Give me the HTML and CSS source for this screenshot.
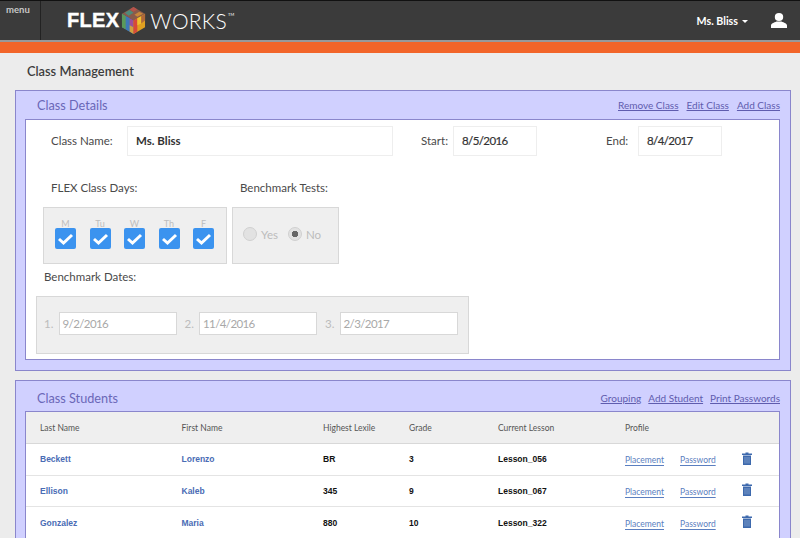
FILE: index.html
```html
<!DOCTYPE html>
<html lang="en">
  <head>
    <meta charset="UTF-8" />
    <meta name="viewport" content="width=device-width, initial-scale=1.0" />
    <title>Class Management</title>
    <link rel="stylesheet" href="styles.css">
  </head>
  <body>
    <header class="topbar">
      <div class="menu">menu</div>
      <div class="logo">
        <span class="logo-flex">FLEX</span>
        <svg class="cube" width="25" height="29" viewBox="0 0 26 30">
          <polygon points="13,1 25,8 13,15 1,8" fill="#8a5a4a"/>
          <polygon points="9,3.5 13,1 17,3.5 13,6" fill="#b5534b"/>
          <polygon points="4,7 9,4 13,7 8,10" fill="#4f8a7a"/>
          <polygon points="14,9 19,6 23,8 17,11" fill="#c9873c"/>
          <polygon points="1,8 13,15 13,29 1,22" fill="#4a7fa8"/>
          <polygon points="1,8 5,10.5 5,24 1,22" fill="#5b9a5a"/>
          <polygon points="5,10.5 9,12.7 9,26.5 5,24" fill="#3f78b8"/>
          <polygon points="9,12.7 13,15 13,22 9,20" fill="#9a4f9c"/>
          <polygon points="9,20 13,22 13,29 9,26.5" fill="#d0a040"/>
          <polygon points="13,15 25,8 25,22 13,29" fill="#e0a020"/>
          <polygon points="13,15 17,12.7 17,26.5 13,29" fill="#d8483a"/>
          <polygon points="17,12.7 21,10.5 21,18 17,20" fill="#f0c030"/>
          <polygon points="21,10.5 25,8 25,15 21,18" fill="#b0683a"/>
        </svg>
        <span class="logo-works">WORKS</span>
        <span class="logo-tm">TM</span>
      </div>
      <div class="user">
        <span class="user-name">Ms. Bliss</span>
        <span class="caret"></span>
        <svg class="user-icon" width="18" height="15" viewBox="0 0 18 15">
          <ellipse cx="9" cy="4" rx="4.2" ry="4" fill="#fff"/>
          <path d="M1 15 V12.5 C1 10.5 4 9.5 6.5 8.5 H11.5 C14 9.5 17 10.5 17 12.5 V15 Z" fill="#fff"/>
        </svg>
      </div>
    </header>
    <div class="stripe"></div>

    <main class="page">
      <h1 class="page-title">Class Management</h1>

      <section class="panel panel-details">
        <div class="panel-head">
          <h2>Class Details</h2>
          <div class="panel-links">
            <a href="#">Remove Class</a>
            <a href="#">Edit Class</a>
            <a href="#">Add Class</a>
          </div>
        </div>
        <div class="panel-body details">
          <div class="name-row">
            <label class="lbl lbl-name">Class Name:</label>
            <div class="field field-name">Ms. Bliss</div>
            <label class="lbl lbl-start">Start:</label>
            <div class="field field-date">8/5/2016</div>
            <label class="lbl lbl-end">End:</label>
            <div class="field field-date">8/4/2017</div>
          </div>

          <div class="heading-row">
            <span class="lbl lbl-days">FLEX Class Days:</span>
            <span class="lbl">Benchmark Tests:</span>
          </div>

          <div class="option-row">
            <div class="well days">
              <div class="day"><span>M</span><i class="check"><svg width="17" height="14" viewBox="0 0 17 14"><path d="M2 7 L6.5 11 L15 3" /></svg></i></div>
              <div class="day"><span>Tu</span><i class="check"><svg width="17" height="14" viewBox="0 0 17 14"><path d="M2 7 L6.5 11 L15 3" /></svg></i></div>
              <div class="day"><span>W</span><i class="check"><svg width="17" height="14" viewBox="0 0 17 14"><path d="M2 7 L6.5 11 L15 3" /></svg></i></div>
              <div class="day"><span>Th</span><i class="check"><svg width="17" height="14" viewBox="0 0 17 14"><path d="M2 7 L6.5 11 L15 3" /></svg></i></div>
              <div class="day"><span>F</span><i class="check"><svg width="17" height="14" viewBox="0 0 17 14"><path d="M2 7 L6.5 11 L15 3" /></svg></i></div>
            </div>
            <div class="well tests">
              <i class="radio"></i><span class="radio-label">Yes</span>
              <i class="radio radio-on"></i><span class="radio-label">No</span>
            </div>
          </div>

          <div class="lbl lbl-dates">Benchmark Dates:</div>
          <div class="well dates">
            <span class="date-num">1.</span><div class="date-input">9/2/2016</div>
            <span class="date-num">2.</span><div class="date-input">11/4/2016</div>
            <span class="date-num">3.</span><div class="date-input">2/3/2017</div>
          </div>
        </div>
      </section>

      <section class="panel panel-students">
        <div class="panel-head">
          <h2>Class Students</h2>
          <div class="panel-links">
            <a href="#">Grouping</a>
            <a href="#">Add Student</a>
            <a href="#">Print Passwords</a>
          </div>
        </div>
        <div class="panel-body">
          <table class="students">
            <colgroup>
              <col class="c-last"><col class="c-first"><col class="c-lexile"><col class="c-grade"><col class="c-lesson"><col class="c-place"><col class="c-pass"><col>
            </colgroup>
            <thead>
              <tr><th>Last Name</th><th>First Name</th><th>Highest Lexile</th><th>Grade</th><th>Current Lesson</th><th colspan="3">Profile</th></tr>
            </thead>
            <tbody>
              <tr>
                <td class="name">Beckett</td><td class="name">Lorenzo</td><td>BR</td><td>3</td><td>Lesson_056</td>
                <td class="link"><a href="#">Placement</a></td><td class="link"><a href="#">Password</a></td>
                <td><svg class="trash" width="10" height="13" viewBox="0 0 10 13"><path d="M3.5 1.5 V0.5 H6.5 V1.5 H10 V3 H0 V1.5 Z M1 3.6 H9 V13 H1 Z" fill="#3d69ad"/><path d="M3 5 V11.5 M5 5 V11.5 M7 5 V11.5" stroke="#8faad2" stroke-width=".8"/></svg></td>
              </tr>
              <tr>
                <td class="name">Ellison</td><td class="name">Kaleb</td><td>345</td><td>9</td><td>Lesson_067</td>
                <td class="link"><a href="#">Placement</a></td><td class="link"><a href="#">Password</a></td>
                <td><svg class="trash" width="10" height="13" viewBox="0 0 10 13"><path d="M3.5 1.5 V0.5 H6.5 V1.5 H10 V3 H0 V1.5 Z M1 3.6 H9 V13 H1 Z" fill="#3d69ad"/><path d="M3 5 V11.5 M5 5 V11.5 M7 5 V11.5" stroke="#8faad2" stroke-width=".8"/></svg></td>
              </tr>
              <tr>
                <td class="name">Gonzalez</td><td class="name">Maria</td><td>880</td><td>10</td><td>Lesson_322</td>
                <td class="link"><a href="#">Placement</a></td><td class="link"><a href="#">Password</a></td>
                <td><svg class="trash" width="10" height="13" viewBox="0 0 10 13"><path d="M3.5 1.5 V0.5 H6.5 V1.5 H10 V3 H0 V1.5 Z M1 3.6 H9 V13 H1 Z" fill="#3d69ad"/><path d="M3 5 V11.5 M5 5 V11.5 M7 5 V11.5" stroke="#8faad2" stroke-width=".8"/></svg></td>
              </tr>
            </tbody>
          </table>
        </div>
      </section>
    </main>
  </body>
</html>
```

FILE: styles.css
```css
html, body {
  height: 100%;
  overflow: hidden;
}

body {
  margin: 0;
  background: #ececec;
  font-family: Lato, "Open Sans", sans-serif;
  color: #3c3c3c;
}

.topbar {
  display: flex;
  height: 39px;
  background: #3b3b3b;
  border-top: 1px solid #111;
}

.menu {
  width: 41px;
  border-right: 1px solid #222;
  padding: 3px 0 0 6px;
  box-sizing: border-box;
  font-size: 9.5px;
  font-weight: 700;
  color: #c8c8c8;
}

.logo {
  display: flex;
  align-items: center;
  margin-left: 26px;
  color: #fff;
}

.logo-flex {
  font-family: "Liberation Sans", sans-serif;
  font-size: 20px;
  font-weight: 700;
  letter-spacing: 0.3px;
  -webkit-text-stroke: 0.4px #fff;
}

.cube {
  margin: 0 4px 0 2px;
}

.logo-works {
  font-size: 21px;
  font-weight: 300;
  letter-spacing: 0.3px;
}

.logo-tm {
  font-size: 4px;
  margin: -12px 0 0 1px;
}

.user {
  display: flex;
  align-items: center;
  margin-left: auto;
  padding-right: 12px;
}

.user-name {
  font-size: 10.7px;
  font-weight: 700;
  color: #fff;
}

.caret {
  width: 0;
  height: 0;
  margin: 1px 0 0 4px;
  border-left: 3px solid transparent;
  border-right: 3px solid transparent;
  border-top: 3px solid #fff;
}

.user-icon {
  margin-left: 22px;
}

.stripe {
  height: 11px;
  background: #f26529;
  border-top: 2px solid #999;
}

.page {
  padding: 0 9px 0 15px;
}

.page-title {
  margin: 0;
  padding: 11px 0 11px 12px;
  font-size: 12.8px;
  line-height: 15px;
  font-weight: 600;
  color: #3c3c3c;
}

.panel {
  margin-bottom: 9px;
  background: #d0d0ff;
  border: 1px solid #8a86cc;
  padding: 0 10px 10px 9px;
}

.panel-head {
  display: flex;
  justify-content: space-between;
  align-items: center;
  height: 28px;
  padding: 0 0 0 12px;
}

.panel-students .panel-head {
  box-sizing: border-box;
  height: 30px;
  padding-top: 3px;
}

.panel-head h2 {
  margin: 0;
  font-size: 12.7px;
  font-weight: 400;
  color: #6a67b8;
}

.panel-links {
  display: flex;
  gap: 8px;
  font-size: 10px;
}

.panel-students .panel-links {
  gap: 7px;
}

.panel-links a {
  color: #5f5cae;
}

.panel-body {
  background: #fff;
  border: 1px solid #8a86cc;
}

.details {
  height: 241px;
  box-sizing: border-box;
  padding: 6px 0 0 10px;
}

.lbl {
  font-size: 11.5px;
  font-weight: 400;
  color: #4a4a4a;
}

.name-row {
  display: flex;
  align-items: center;
}

.name-row .lbl {
  padding-bottom: 2px;
}

.field {
  height: 30px;
  box-sizing: border-box;
  border: 1px solid #eee;
  padding-left: 8px;
  font-size: 11.5px;
  font-weight: 700;
  line-height: 28px;
  color: #333;
}

.lbl-name {
  width: 76px;
  padding-left: 15px;
  box-sizing: content-box;
}

.field-name {
  width: 266px;
}

.lbl-start {
  width: 32px;
  margin-left: 28px;
}

.field-date {
  width: 84px;
  font-weight: 400;
  letter-spacing: -0.6px;
  -webkit-text-stroke: 0.2px #333;
}

.lbl-end {
  width: 32px;
  margin-left: 69px;
}

.heading-row {
  display: flex;
  margin-top: 25px;
  padding-left: 15px;
}

.lbl-days {
  width: 189px;
}

.option-row {
  display: flex;
  gap: 5px;
  margin-top: 13px;
  padding-left: 7px;
}

.well {
  box-sizing: border-box;
  background: #efefef;
  border: 1px solid #d8d8d8;
}

.days {
  display: flex;
  gap: 13.5px;
  width: 184px;
  height: 57px;
  padding: 11px 0 0 11px;
}

.day {
  display: flex;
  flex-direction: column;
  align-items: center;
  width: 21px;
  font-size: 9px;
  color: #bdbdbd;
}

.day span {
  height: 9px;
  line-height: 9px;
}

.check {
  display: flex;
  justify-content: center;
  align-items: center;
  width: 21px;
  height: 21px;
  border-radius: 2px;
  background: #3b93ef;
}

.check path {
  fill: none;
  stroke: #fff;
  stroke-width: 3;
}

.tests {
  display: flex;
  align-items: center;
  width: 107px;
  height: 57px;
  padding: 0 0 3px 10px;
  font-size: 11.5px;
  color: #bcbcbc;
}

.radio {
  width: 12px;
  height: 12px;
  border-radius: 50%;
  background: #e2e2e2;
  border: 1px solid #d0d0d0;
  margin-right: 4px;
}

.radio-on {
  background: radial-gradient(circle, #666 0 3px, #e2e2e2 3.5px);
  margin-left: 10px;
}

.lbl-dates {
  margin: 5px 0 0 8px;
  line-height: 14px;
  height: 18px;
  padding-top: 1px;
}

.dates {
  display: flex;
  align-items: center;
  width: 433px;
  height: 58px;
  margin-top: 8px;
  padding: 0 0 3px 7px;
  font-size: 11.5px;
  color: #bcbcbc;
}

.date-num {
  width: 14.5px;
}

.date-input {
  width: 118px;
  height: 23px;
  box-sizing: border-box;
  margin-right: 8px;
  border: 1px solid #d8d8d8;
  background: #fff;
  padding-left: 3px;
  line-height: 21px;
  letter-spacing: -0.6px;
  color: #a8a8a8;
}

.students {
  width: 100%;
  table-layout: fixed;
  border-collapse: collapse;
}

.c-last, .c-first {
  width: 141.5px;
}

.c-lexile {
  width: 86px;
}

.c-grade {
  width: 89px;
}

.c-lesson {
  width: 127px;
}

.c-place {
  width: 55px;
}

.c-pass {
  width: 62px;
}

.students th {
  box-sizing: border-box;
  height: 31.5px;
  padding: 0 0 0 14px;
  background: #efefef;
  border-bottom: 1px solid #d8d8d8;
  text-align: left;
  font-size: 8.5px;
  font-weight: 400;
  color: #555;
}

.students td {
  box-sizing: border-box;
  height: 31.67px;
  padding: 0 0 0 14px;
  border-bottom: 1px solid #e4e4e4;
  font-family: "Liberation Sans", sans-serif;
  font-size: 8.5px;
  font-weight: 700;
  color: #111;
}

.students td.name {
  color: #4a6cb5;
}

.students td.link {
  font-family: Lato, sans-serif;
  font-weight: 400;
  padding-top: 2px;
}

.students td.link a {
  color: #5a7ec0;
  text-underline-offset: 2px;
}

.trash {
  display: block;
  margin-bottom: 2px;
}
```
